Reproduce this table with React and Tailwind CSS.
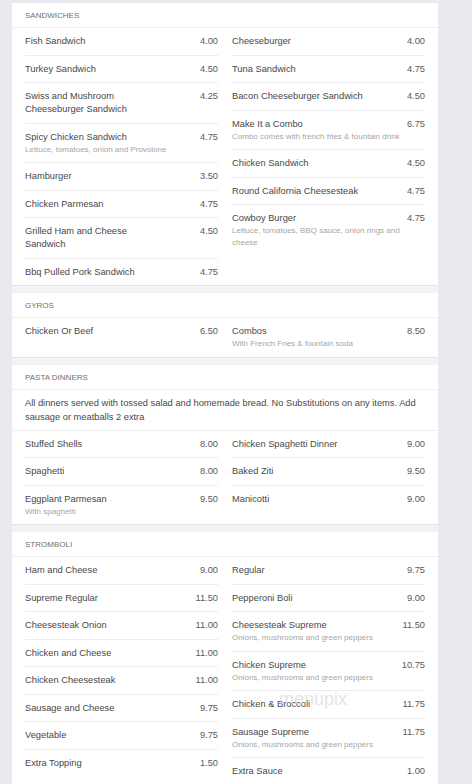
import React from "react";

const FONT = { fontFamily: '"Liberation Sans", Arial, sans-serif' };

const sections = [
  {
    title: "SANDWICHES",
    left: [
      { name: "Fish Sandwich", price: "4.00" },
      { name: "Turkey Sandwich", price: "4.50" },
      { name: "Swiss and Mushroom Cheeseburger Sandwich", price: "4.25" },
      { name: "Spicy Chicken Sandwich", price: "4.75", desc: "Lettuce, tomatoes, onion and Provolone" },
      { name: "Hamburger", price: "3.50" },
      { name: "Chicken Parmesan", price: "4.75" },
      { name: "Grilled Ham and Cheese Sandwich", price: "4.50" },
      { name: "Bbq Pulled Pork Sandwich", price: "4.75" },
    ],
    right: [
      { name: "Cheeseburger", price: "4.00" },
      { name: "Tuna Sandwich", price: "4.75" },
      { name: "Bacon Cheeseburger Sandwich", price: "4.50" },
      { name: "Make It a Combo", price: "6.75", desc: "Combo comes with french fries & fountain drink" },
      { name: "Chicken Sandwich", price: "4.50" },
      { name: "Round California Cheesesteak", price: "4.75" },
      { name: "Cowboy Burger", price: "4.75", desc: "Lettuce, tomatoes, BBQ sauce, onion rings and cheese" },
    ],
  },
  {
    title: "GYROS",
    left: [{ name: "Chicken Or Beef", price: "6.50" }],
    right: [{ name: "Combos", price: "8.50", desc: "With French Fries & fountain soda" }],
  },
  {
    title: "PASTA DINNERS",
    note: "All dinners served with tossed salad and homemade bread. No Substitutions on any items. Add sausage or meatballs 2 extra",
    left: [
      { name: "Stuffed Shells", price: "8.00" },
      { name: "Spaghetti", price: "8.00" },
      { name: "Eggplant Parmesan", price: "9.50", desc: "With spaghetti" },
    ],
    right: [
      { name: "Chicken Spaghetti Dinner", price: "9.00" },
      { name: "Baked Ziti", price: "9.50" },
      { name: "Manicotti", price: "9.00" },
    ],
  },
  {
    title: "STROMBOLI",
    watermark: true,
    left: [
      { name: "Ham and Cheese", price: "9.00" },
      { name: "Supreme Regular", price: "11.50" },
      { name: "Cheesesteak Onion", price: "11.00" },
      { name: "Chicken and Cheese", price: "11.00" },
      { name: "Chicken Cheesesteak", price: "11.00" },
      { name: "Sausage and Cheese", price: "9.75" },
      { name: "Vegetable", price: "9.75" },
      { name: "Extra Topping", price: "1.50" },
    ],
    right: [
      { name: "Regular", price: "9.75" },
      { name: "Pepperoni Boli", price: "9.00" },
      { name: "Cheesesteak Supreme", price: "11.50", desc: "Onions, mushrooms and green peppers" },
      { name: "Chicken Supreme", price: "10.75", desc: "Onions, mushrooms and green peppers" },
      { name: "Chicken & Broccoli", price: "11.75" },
      { name: "Sausage Supreme", price: "11.75", desc: "Onions, mushrooms and green peppers" },
      { name: "Extra Sauce", price: "1.00" },
    ],
  },
];

function MenuRow({ item, last }) {
  return (
    <div className={`pt-[7px] pb-[6.5px] ${last ? "" : "border-b border-[#ececef]"}`}>
      <div className="flex items-start justify-between text-[9.3px] leading-[13px] text-[#484848]">
        <span className="max-w-[138px]">{item.name}</span>
        <span className="text-[#5a5a5a]">{item.price}</span>
      </div>
      {item.desc && (
        <div className="pr-[24px] text-[8px] leading-[12px] text-[#a6a6a6]">{item.desc}</div>
      )}
    </div>
  );
}

function Column({ items }) {
  return (
    <div className="flex flex-col">
      {items.map((it, i) => (
        <MenuRow key={it.name} item={it} last={i === items.length - 1} />
      ))}
    </div>
  );
}

function Section({ s }) {
  return (
    <div className="relative bg-white border-b border-[#e2e2e7]">
      <div className="px-[13px] pt-[8px] pb-[6px] text-[8px] leading-[10px] text-[#707070] border-b border-[#efeff2]">
        {s.title}
      </div>
      {s.note && (
        <div className="px-[13px] py-[6px] text-[9.3px] leading-[14px] text-[#484848] border-b border-[#efeff2]">
          {s.note}
        </div>
      )}
      <div className="grid grid-cols-2 gap-x-[14px] px-[13px]">
        <Column items={s.left} />
        <Column items={s.right} />
      </div>
      {/* watermark from the source photo */}
      {s.watermark && (
        <span className="absolute left-[267px] top-[158px] text-[18px] leading-[18px] text-[#d4d4d4] opacity-60 pointer-events-none">
          menupix
        </span>
      )}
    </div>
  );
}

export default function App() {
  return (
    <div className="min-h-screen bg-[#e9e9ee] pt-[3px]" style={FONT}>
      <div className="ml-[12px] w-[426px] flex flex-col gap-[7px] bg-[#f3f3f6]">
        {sections.map((s) => (
          <Section key={s.title} s={s} />
        ))}
      </div>
    </div>
  );
}
